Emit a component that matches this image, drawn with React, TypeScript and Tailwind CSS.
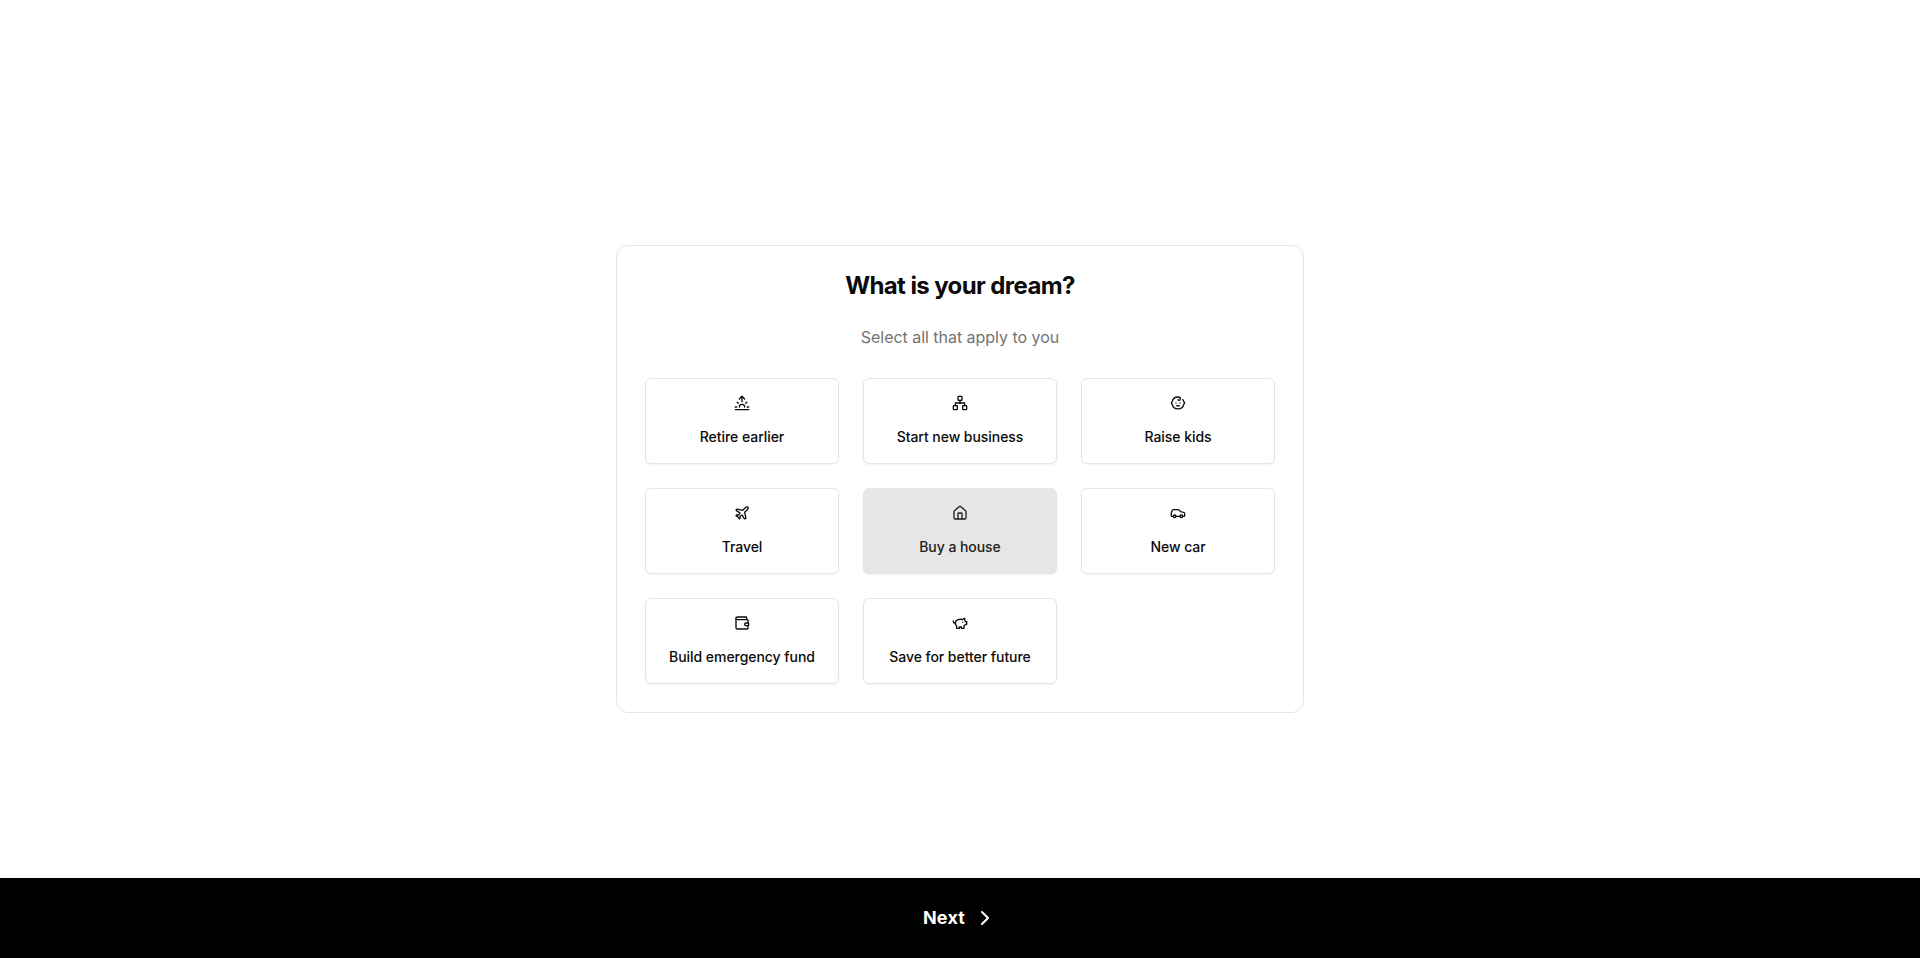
import { useState } from "react";
import {
  Baby,
  Car,
  ChevronRight,
  House,
  Network,
  Plane,
  Sunrise,
  Wallet,
} from "lucide-react";

const PiggyBank = ({ className }: { className?: string }) => (
  <svg
    className={className}
    viewBox="0 0 24 24"
    fill="none"
    stroke="currentColor"
    strokeWidth="2"
    strokeLinecap="round"
    strokeLinejoin="round"
  >
    <path d="M19 5c-1.5 0-2.8 1.4-3 2-3.5-1.5-11-.3-11 5 0 1.8 0 3 2 4.5V20h4v-2h3v2h4v-4c1-.5 1.7-1 2-2h2v-4h-2c0-1-.5-1.5-1-2V5z" />
    <path d="M2 9v1c0 1.1.9 2 2 2h1" />
    <path d="M16 11h.01" />
  </svg>
);

const dreams = [
  { label: "Retire earlier", icon: Sunrise },
  { label: "Start new business", icon: Network },
  { label: "Raise kids", icon: Baby },
  { label: "Travel", icon: Plane },
  { label: "Buy a house", icon: House },
  { label: "New car", icon: Car },
  { label: "Build emergency fund", icon: Wallet },
  { label: "Save for better future", icon: PiggyBank },
];

const Home: React.FC = () => {
  const [selected, setSelected] = useState<string[]>(["Buy a house"]);

  const toggle = (label: string) => {
    setSelected((prev) =>
      prev.includes(label) ? prev.filter((l) => l !== label) : [...prev, label]
    );
  };

  return (
    <div className="flex flex-col h-screen bg-white text-[#0a0a0a] font-['Inter',sans-serif]">
      <main className="flex flex-1 items-center justify-center pt-20">
        <div className="w-[688px] rounded-xl border border-[#e5e5e5] p-7">
          <h1 className="text-2xl leading-6 font-bold text-center tracking-tight">
            What is your dream?
          </h1>
          <p className="mt-[27px] text-base text-center tracking-[-0.03px] text-[#737373]">
            Select all that apply to you
          </p>
          <div className="mt-[29px] grid grid-cols-3 gap-6">
            {dreams.map(({ label, icon: Icon }) => (
              <button
                key={label}
                onClick={() => toggle(label)}
                className={`flex h-[86px] flex-col items-center rounded-md border pt-4 text-sm font-medium tracking-[-0.05px] shadow-xs ${
                  selected.includes(label)
                    ? "border-[#e6e6e6] bg-[#e6e6e6] text-[#212121]"
                    : "border-[#e5e5e5] bg-white"
                }`}
              >
                <Icon className="size-4" />
                <span className="mt-4">{label}</span>
              </button>
            ))}
          </div>
        </div>
      </main>
      <button className="flex h-20 w-full items-center justify-center gap-2 bg-black text-lg font-bold text-white">
        <span className="tracking-[0.2px]">Next</span>
        <ChevronRight className="size-6" />
      </button>
    </div>
  );
};
export default Home;
